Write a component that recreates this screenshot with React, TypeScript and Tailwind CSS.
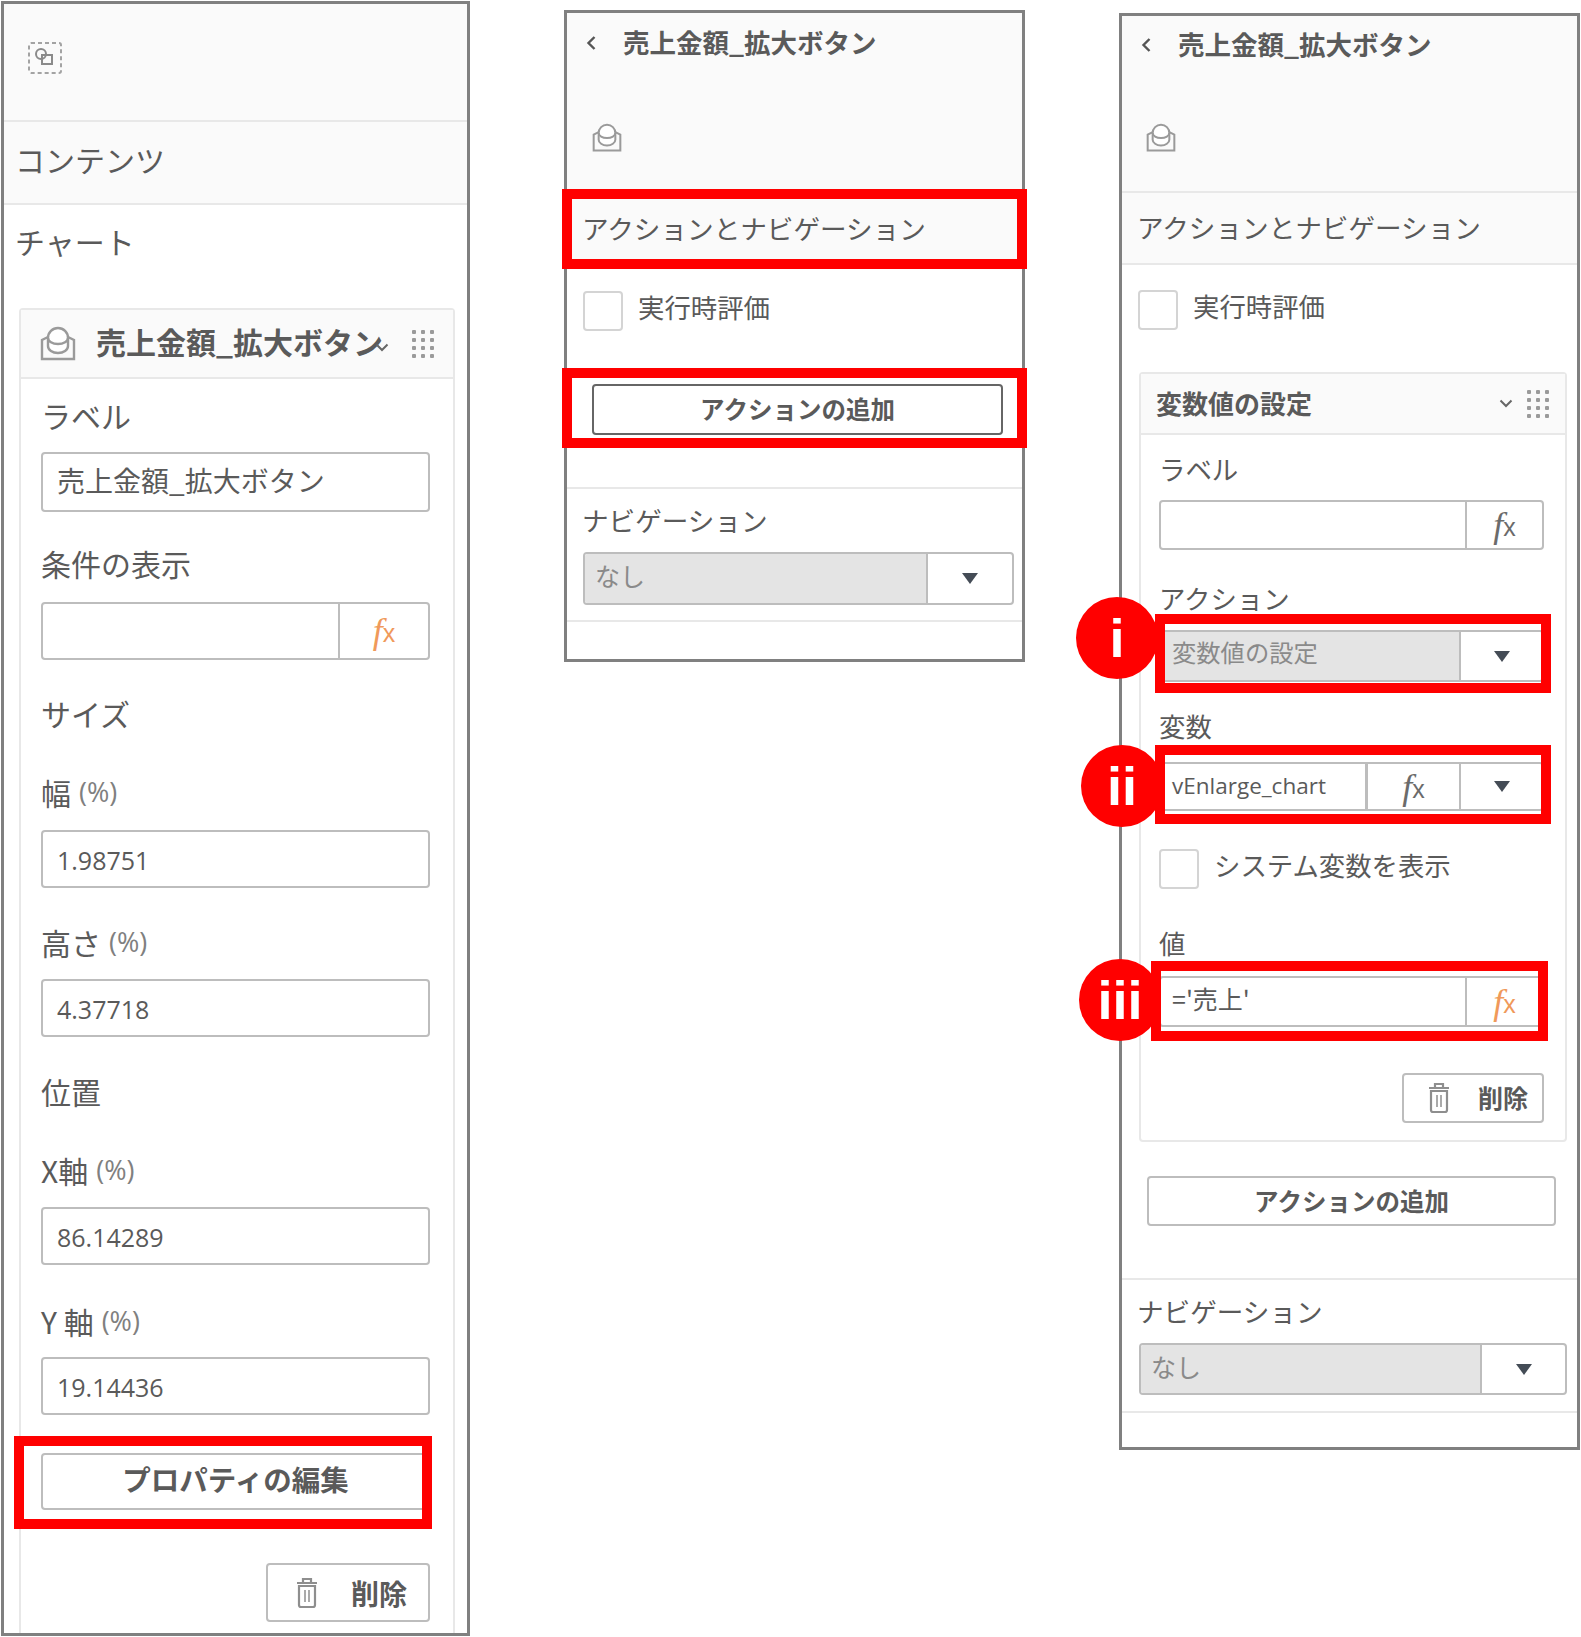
import type { ReactNode } from "react";

const RED_BOX = "absolute border-[10px] border-[#ff0000] pointer-events-none z-10";
const BADGE =
    "absolute w-[82px] h-[82px] rounded-full bg-[#ff0000] text-white z-20 flex items-center justify-center font-['Liberation_Sans',sans-serif] font-bold text-[54px] leading-none";

const SelectIcon = () => (
    <svg width="36" height="34" viewBox="0 0 36 34" fill="none" stroke="#a3a3a3" strokeWidth="2">
        <rect x="2" y="2" width="32" height="30" rx="2" strokeDasharray="4 3" />
        <circle cx="14" cy="13" r="5" stroke="#8a8a8a" />
        <rect x="15" y="14" width="10" height="9" stroke="#8a8a8a" />
    </svg>
);

const ButtonIcon = ({ size = 36 }: { size?: number }) => (
    <svg width={size} height={size} viewBox="0 0 36 36" fill="none" stroke="#9a9a9a" strokeWidth="2.4">
        <path d="M8 11 L2 14 V33 H34 V14 L28 11" />
        <path d="M8 20 V12 A10 10 0 0 1 28 12 V20 A10 7 0 0 1 8 20 Z" fill="#fff" />
        <path d="M8 12 A10 6 0 0 0 28 12" />
    </svg>
);

const Grip = () => (
    <svg width="22" height="30" viewBox="0 0 22 30" fill="#9a9a9a">
        {[2, 11, 20].map((x) =>
            [3, 11, 19, 27].map((y) => <rect key={`${x}-${y}`} x={x - 2} y={y - 2} width="4" height="4" rx="1" />)
        )}
    </svg>
);

const ChevronDown = () => (
    <svg width="14" height="9" viewBox="0 0 14 9" fill="none" stroke="#666" strokeWidth="2">
        <path d="M1.5 1.5 L7 7 L12.5 1.5" />
    </svg>
);

const ChevronLeft = () => (
    <svg width="10" height="16" viewBox="0 0 10 16" fill="none" stroke="#555" strokeWidth="2.4">
        <path d="M8.5 2 L2.5 8 L8.5 14" />
    </svg>
);

const Arrow = () => (
    <svg width="16" height="11" viewBox="0 0 16 11">
        <path d="M0 0 H16 L8 11 Z" fill="#444c56" />
    </svg>
);

const Trash = () => (
    <svg width="22" height="32" viewBox="0 0 22 32" fill="none" stroke="#8e8e8e" strokeWidth="2.2">
        <path d="M1 6 H21 M7 6 V2 H15 V6" />
        <path d="M3 9 H19 V28 Q19 30 17 30 H5 Q3 30 3 28 Z" />
        <path d="M9 13 V25 M13 13 V25" strokeWidth="1.5" />
    </svg>
);

const Fx = ({ orange = false }: { orange?: boolean }) => (
    <span className={`flex items-center leading-none ${orange ? "text-[#f0995a]" : "text-[#6b6b6b]"}`}>
        <span className="font-['Liberation_Serif',serif] italic text-[36px]">f</span>
        <span className="font-['Liberation_Sans',sans-serif] text-[25px] mt-[5px]">x</span>
    </span>
);

const Label = ({ children, className = "" }: { children: ReactNode; className?: string }) => (
    <div className={`h-[36px] flex items-center whitespace-nowrap ${className}`}>{children}</div>
);

const Checkbox = ({ children, className = "" }: { children: ReactNode; className?: string }) => (
    <div className={`flex items-center gap-[15px] ${className}`}>
        <div className="w-[40px] h-[40px] rounded-[4px] border-2 border-[#d4d4d4] bg-white" />
        <span className="text-[26.4px] leading-none pb-[7px]">{children}</span>
    </div>
);

const Number = ({ value, className = "" }: { value: string; className?: string }) => (
    <div
        className={`w-[389px] h-[58px] rounded-[4px] border-2 border-[#bdbdbd] flex items-center pl-[14px] pt-[3px] font-['Open_Sans',sans-serif] text-[25px] ${className}`}
    >
        {value}
    </div>
);

const Percent = () => <span className="ml-[8px] text-[27px] font-['Open_Sans',sans-serif] text-[#808080]">(%)</span>;

const DeleteButton = ({ className = "" }: { className?: string }) => (
    <div className={`ml-auto rounded-[4px] border-2 border-[#bdbdbd] flex items-center font-bold ${className}`}>
        <Trash />
        <span>削除</span>
    </div>
);

const NavSelect = ({ className = "", grayWidth }: { className?: string; grayWidth: string }) => (
    <div className={`rounded-[4px] border-2 border-[#bdbdbd] flex overflow-hidden ${className}`}>
        <div
            className={`${grayWidth} bg-[#e4e4e4] border-r-2 border-[#bdbdbd] flex items-center pl-[10px] pb-[5px] text-[25px] text-[#8a8a8a]`}
        >
            なし
        </div>
        <div className="flex-1 flex items-center justify-center">
            <Arrow />
        </div>
    </div>
);

const PropertiesPanel = () => (
    <div className="w-[469px] h-[1635px] border-[3px] border-[#808080] shrink-0">
        <div className="h-[118px] bg-[#fafafa] border-b-2 border-[#e8e8e8] pl-[23px] pt-[37px]">
            <SelectIcon />
        </div>
        <div className="h-[83px] bg-[#fafafa] border-b-2 border-[#e8e8e8] pl-[11px] pb-[8px] flex items-center text-[30px] leading-none">
            コンテンツ
        </div>
        <div className="h-[78px] pl-[11px] pb-[6px] flex items-center text-[30px] leading-none">チャート</div>
        <div className="ml-[15px] mt-[25px] w-[436px] h-[1325px] border-x-2 border-t-2 border-[#e8e8e8] rounded-t-[4px]">
            <div className="h-[69px] bg-[#fafafa] border-b-2 border-[#e8e8e8] flex items-center pl-[19px] pr-[19px]">
                <ButtonIcon />
                <span className="ml-[20px] pb-[5px] text-[30px] font-bold leading-none whitespace-nowrap">
                    売上金額_拡大ボタン
                </span>
                <span className="-ml-[8px] mt-[8px]">
                    <ChevronDown />
                </span>
                <span className="ml-auto">
                    <Grip />
                </span>
            </div>
            <div className="pl-[20px] flex flex-col items-start w-[409px] text-[30px]">
                <Label className="mt-[21px] pb-[6px]">ラベル</Label>
                <div className="mt-[16px] w-[389px] h-[60px] rounded-[4px] border-2 border-[#bdbdbd] flex items-center pl-[14px] pb-[5px] text-[28px]">
                    売上金額_拡大ボタン
                </div>
                <Label className="mt-[36px] pb-[5px]">条件の表示</Label>
                <div className="mt-[18px] w-[389px] h-[58px] rounded-[4px] border-2 border-[#bdbdbd] flex">
                    <div className="w-[297px] border-r-2 border-[#bdbdbd]" />
                    <div className="flex-1 flex items-center justify-center">
                        <Fx orange />
                    </div>
                </div>
                <Label className="mt-[38px] pb-[5px]">サイズ</Label>
                <Label className="mt-[43px] pb-[5px]">
                    幅<Percent />
                </Label>
                <Number value="1.98751" className="mt-[17px]" />
                <Label className="mt-[39px] pb-[5px]">
                    高さ<Percent />
                </Label>
                <Number value="4.37718" className="mt-[16px]" />
                <Label className="mt-[39px] pb-[5px]">位置</Label>
                <Label className="mt-[42px] pb-[4px]">
                    X軸<Percent />
                </Label>
                <Number value="86.14289" className="mt-[17px]" />
                <Label className="mt-[40px] pb-[4px]">
                    Y 軸<Percent />
                </Label>
                <Number value="19.14436" className="mt-[16px]" />
                <div className="relative mt-[38px]">
                    <div className="w-[389px] h-[57px] rounded-[4px] border-2 border-[#bdbdbd] flex items-center justify-center pb-[5px] font-bold text-[28.5px]">
                        プロパティの編集
                    </div>
                    <div className={`${RED_BOX} -left-[27px] -right-[2px] -top-[17px] -bottom-[19px]`} />
                </div>
                <DeleteButton className="mt-[53px] w-[164px] h-[59px] pl-[28px] gap-[33px] text-[28px]" />
            </div>
        </div>
    </div>
);

const Header = () => (
    <div className="h-[58px] flex items-center">
        <span className="w-[20px] flex justify-center ml-[14px]">
            <ChevronLeft />
        </span>
        <span className="ml-[22px] pb-[2px] text-[26.5px] font-bold leading-none whitespace-nowrap">
            売上金額_拡大ボタン
        </span>
    </div>
);

const ActionPanel = () => (
    <div className="ml-[94px] mt-[9px] w-[461px] h-[652px] border-[3px] border-[#808080] shrink-0">
        <div className="h-[180px] bg-[#fafafa] pt-[1px]">
            <Header />
            <div className="pl-[25px] pt-[51px]">
                <ButtonIcon size={30} />
            </div>
        </div>
        <div className="relative h-[72px] bg-[#fafafa] pl-[15px] pb-[2px] flex items-center text-[26.6px] leading-none">
            アクションとナビゲーション
            <div className={`${RED_BOX} -left-[5px] -right-[5px] -top-[4px] -bottom-[4px]`} />
        </div>
        <Checkbox className="mt-[26px] ml-[16px]">実行時評価</Checkbox>
        <div className="relative mt-[53px] h-[51px]">
            <div className="ml-[25px] w-[411px] h-[51px] rounded-[4px] border-2 border-[#666] flex items-center justify-center font-bold text-[24.5px]">
                アクションの追加
            </div>
            <div className={`${RED_BOX} -left-[5px] -right-[5px] -top-[16px] -bottom-[13px]`} />
        </div>
        <div className="mt-[52px] border-t-2 border-[#e8e8e8]" />
        <Label className="mt-[14px] ml-[15px] pb-[3px] text-[26.6px]">ナビゲーション</Label>
        <NavSelect className="mt-[13px] ml-[16px] w-[431px] h-[53px]" grayWidth="w-[343px]" />
        <div className="mt-[15px] border-t-2 border-[#e8e8e8]" />
    </div>
);

const VariablePanel = () => (
    <div className="ml-[94px] mt-[12px] w-[461px] h-[1437px] border-[3px] border-[#808080] shrink-0">
        <div className="h-[177px] bg-[#fafafa] border-b-2 border-[#e8e8e8]">
            <Header />
            <div className="pl-[24px] pt-[49px]">
                <ButtonIcon size={30} />
            </div>
        </div>
        <div className="h-[72px] bg-[#fafafa] border-b-2 border-[#e8e8e8] pl-[15px] pb-[2px] flex items-center text-[26.6px] leading-none">
            アクションとナビゲーション
        </div>
        <Checkbox className="mt-[25px] ml-[16px]">実行時評価</Checkbox>

        <div className="ml-[17px] mt-[42px] w-[428px] h-[770px] border-2 border-[#e8e8e8] rounded-[4px]">
            <div className="h-[61px] bg-[#fafafa] border-b-2 border-[#e8e8e8] flex items-center pl-[15px] pr-[16px]">
                <span className="text-[26px] pb-[2px] font-bold leading-none">変数値の設定</span>
                <span className="ml-auto mr-[14px]">
                    <ChevronDown />
                </span>
                <Grip />
            </div>
            <div className="pl-[18px] w-[403px] flex flex-col items-stretch text-[26.4px]">
                <Label className="mt-[17px] pb-[3px]">ラベル</Label>
                <div className="mt-[12px] h-[50px] rounded-[4px] border-2 border-[#bdbdbd] flex">
                    <div className="w-[306px] border-r-2 border-[#bdbdbd]" />
                    <div className="flex-1 flex items-center justify-center">
                        <Fx />
                    </div>
                </div>

                <Label className="mt-[32px] pb-[4px]">アクション</Label>
                <div className="relative mt-[12px] h-[52px]">
                    <div className="h-full rounded-[4px] border-2 border-[#bdbdbd] flex overflow-hidden">
                        <div className="w-[300px] bg-[#e4e4e4] border-r-2 border-[#bdbdbd] flex items-center pl-[11px] pb-[7px] text-[24.3px] text-[#8a8a8a]">
                            変数値の設定
                        </div>
                        <div className="flex-1 flex items-center justify-center">
                            <Arrow />
                        </div>
                    </div>
                    <div className={`${RED_BOX} -left-[4px] -right-[7px] -top-[16px] -bottom-[11px]`} />
                    <div className={`${BADGE} -left-[83px] -top-[33px]`}>i</div>
                </div>

                <Label className="mt-[28px] pb-[4px]">変数</Label>
                <div className="relative mt-[16px] h-[49px]">
                    <div className="h-full rounded-[4px] border-2 border-[#bdbdbd] flex">
                        <div className="w-[207px] border-r-[3px] border-[#bdbdbd] flex items-center pl-[11px] pb-[2px] font-['Open_Sans',sans-serif] text-[22.5px]">
                            vEnlarge_chart
                        </div>
                        <div className="w-[93px] border-r-2 border-[#bdbdbd] flex items-center justify-center">
                            <Fx />
                        </div>
                        <div className="flex-1 flex items-center justify-center">
                            <Arrow />
                        </div>
                    </div>
                    <div className={`${RED_BOX} -left-[4px] -right-[7px] -top-[17px] -bottom-[13px]`} />
                    <div className={`${BADGE} -left-[78px] -top-[17px]`}>ii</div>
                </div>

                <Checkbox className="mt-[38px]">システム変数を表示</Checkbox>

                <Label className="mt-[36px]">値</Label>
                <div className="relative mt-[15px] h-[51px]">
                    <div className="h-full rounded-[4px] border-2 border-[#bdbdbd] flex">
                        <div className="w-[306px] border-r-2 border-[#bdbdbd] flex items-center pl-[11px] pb-[6px] text-[25px]">
                            ='売上'
                        </div>
                        <div className="flex-1 flex items-center justify-center">
                            <Fx orange />
                        </div>
                    </div>
                    <div className={`${RED_BOX} -left-[8px] -right-[4px] -top-[15px] -bottom-[14px]`} />
                    <div className={`${BADGE} -left-[80px] -top-[17px]`}>iii</div>
                </div>

                <DeleteButton className="mt-[46px] w-[142px] h-[50px] pl-[24px] gap-[28px] text-[25px]" />
            </div>
        </div>

        <div className="ml-[25px] mt-[34px] w-[409px] h-[50px] rounded-[4px] border-2 border-[#bdbdbd] flex items-center justify-center font-bold text-[24.5px]">
            アクションの追加
        </div>
        <div className="mt-[52px] border-t-2 border-[#e8e8e8]" />
        <Label className="mt-[14px] ml-[15px] pb-[3px] text-[26.6px]">ナビゲーション</Label>
        <NavSelect className="mt-[13px] ml-[17px] w-[428px] h-[52px]" grayWidth="w-[341px]" />
        <div className="mt-[16px] border-t-2 border-[#e8e8e8]" />
    </div>
);

export default function App() {
    return (
        <div className="w-[1581px] h-[1637px] bg-white flex items-start pl-[1px] pt-[1px] overflow-hidden text-[#5a5a5a] font-['Noto_Sans_CJK_JP','Noto_Sans',sans-serif]">
            <PropertiesPanel />
            <ActionPanel />
            <VariablePanel />
        </div>
    );
}
